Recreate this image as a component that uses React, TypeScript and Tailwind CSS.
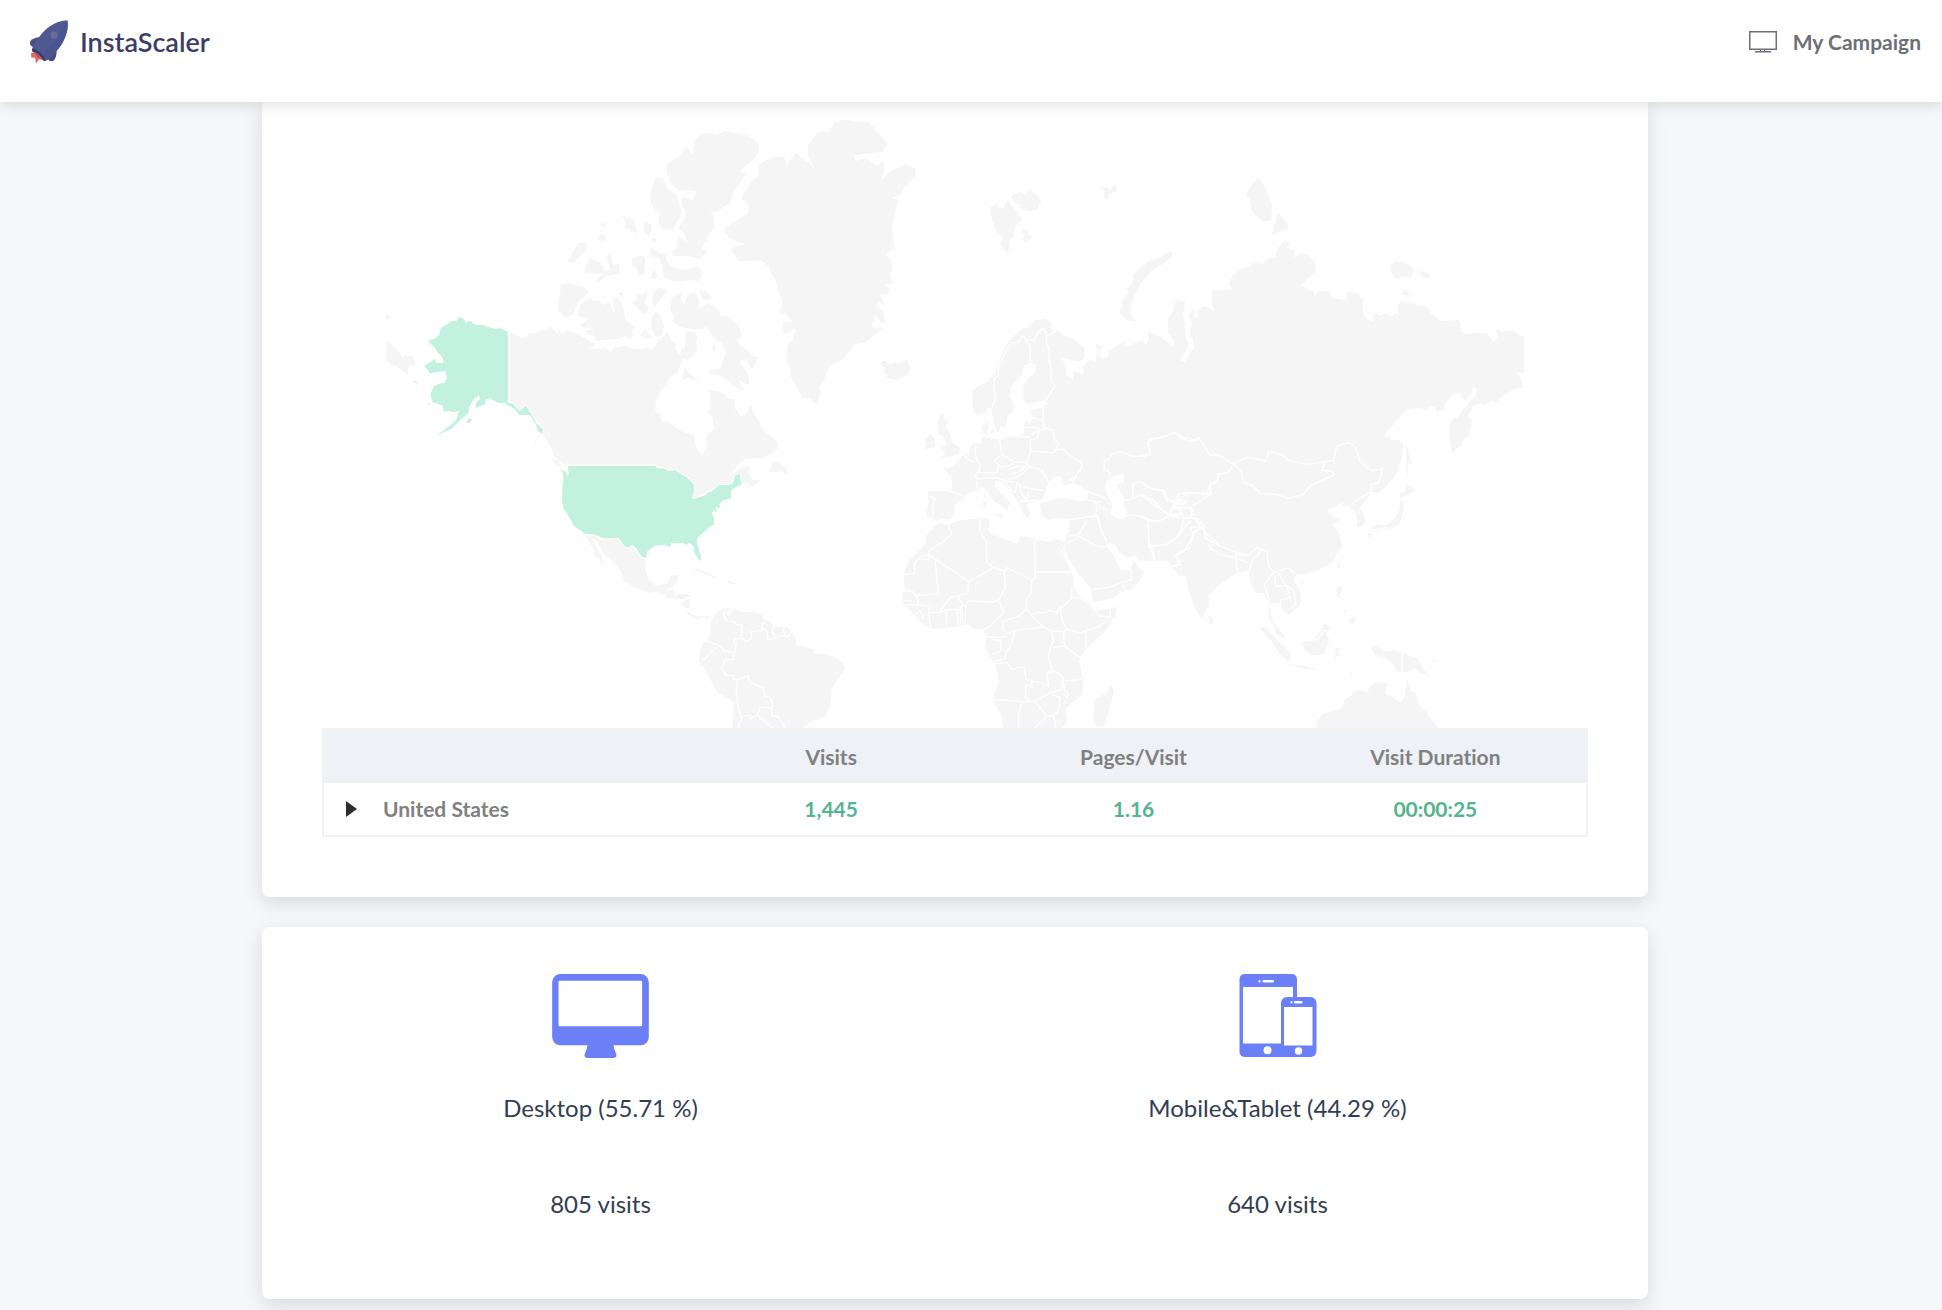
interface Region {
  name: string
  transform: string
  land: string
  water?: string
  borders?: string
}

const usa =
  'M82 75L345 75 350 80 375 84 385 90 405 88 438 107 460 128 462 150 455 168 460 174 497 162 500 155 516 150 535 133 560 133 578 127 585 102 600 98 600 118 607 128 580 142 572 152 573 172 548 178 538 190 540 200 532 200 527 196 530 215 521 206 515 218 522 232 521 250 505 260 487 277 472 290 470 305 482 345 482 360 475 355 462 335 460 315 448 306 437 312 427 305 392 307 393 317 383 317 375 311 345 314 322 330 318 352 305 347 285 318 275 312 265 320 255 318 235 291 215 292 190 292 160 280 135 279 125 270 103 257 85 225 70 203 66 185 66 145 70 110 64 85 75 92 83 104 86 98Z'

const alaska =
  'M268 647L278 652 288 666 295 661 306 662 308 668 325 673 334 671 357 679 379 685 390 681 413 692 413 906 385 906 358 892 346 897 345 909 316 922 318 904 330 893 325 883 312 893 295 920 297 933 265 962 243 985 228 990 197 1005 203 1000 222 988 240 973 258 957 266 930 245 934 238 929 220 932 217 914 200 907 188 905 180 880 192 855 206 849 223 845 230 830 226 812 236 810 205 812 180 817 162 794 195 773 197 785 221 785 214 765 200 752 195 740 174 722 180 716 193 714 207 702 211 682 222 675 246 660 258 661Z' +
  'M405 904L427 908 448 931 467 914 483 938 500 968 518 985 517 999 503 990 498 972 480 943 448 941 430 922 408 910Z' +
  'M288 966L296 952 306 955 298 965ZM126 841L138 841 148 850ZM170 906L180 908 176 913Z'

const regions: Region[] = [
  {
    name: 'canada',
    transform: 'translate(370 100) scale(0.33333)',
    land:
      'M418 694L437 699 460 714 478 697 493 697 508 686 522 688 529 690 541 674 550 688 562 698 568 684 573 701 592 688 622 700 648 714 668 725 674 734 657 742 680 745 705 740 720 753 734 738 757 736 765 733 790 745 825 742 840 738 843 754 848 737 858 735 862 718 878 707 893 693 903 718 917 730 915 742 926 760 940 735 942 770 937 775 928 800 922 812 905 825 888 850 872 870 858 895 855 932 870 938 877 965 895 963 925 985 948 996 970 1000 975 1030 987 1052 997 1062 1010 1040 1004 1010 1030 985 1028 955 1013 935 1022 915 1017 868 1040 870 1065 880 1075 893 1092 893 1095 925 1113 946 1130 935 1141 910 1152 940 1168 962 1170 975 1190 1000 1210 1012 1224 1030 1222 1045 1200 1060 1180 1072 1150 1072 1122 1075 1100 1095 1078 1125 1110 1105 1142 1092 1135 1115 1150 1138 1180 1135 1155 1150 1130 1164 1138 1150 1117 1145 1112 1118 1093 1120 1087 1140 1070 1148 1045 1150 1025 1167 1007 1170 1005 1178 972 1190 965 1185 973 1170 970 1145 950 1123 915 1105 880 1102 855 1090 590 1090 582 1092 550 1065 542 1040 530 1020 520 1000 520 985 500 960 483 935 467 912 448 930 427 905 418 903Z' +
      'M975 115L990 100 1030 95 1036 103 1064 90 1130 103 1155 118 1166 135 1165 155 1140 187 1122 196 1110 214 1130 215 1092 272 1079 308 1057 318 1048 330 1018 337 1034 345 1030 355 1035 378 1012 405 1008 422 996 435 996 446 1015 448 990 475 950 466 908 466 906 450 922 440 922 405 950 424 942 395 925 383 935 360 948 350 946 330 935 312 932 290 950 290 965 298 982 272 945 266 925 270 905 250 890 215 888 188 932 164 947 136 967 162Z' +
      'M857 231L878 231 890 262 921 284 928 315 935 337 922 360 908 387 880 385 865 370 866 348 873 333 857 332 842 305 840 280 850 248Z' +
      'M755 341L790 358 805 402 775 383 758 380 768 370ZM821 363L840 368 845 385 833 405 822 390ZM842 411L860 412 860 422 845 420ZM690 372L698 364 709 374 700 380ZM682 412L695 397 708 408 698 422 685 418ZM625 427L650 423 648 448 612 484 598 486 592 480Z' +
      'M658 470L685 482 708 510 722 508 708 468 715 458 722 468 730 495 747 488 747 518 710 525 685 543 675 540 698 516 640 518ZM784 475L808 462 825 470 823 520 805 525 798 498 784 495ZM850 503L862 520 858 535 840 532Z' +
      'M838 441L850 443 865 457 887 458 890 482 908 498 935 508 980 497 993 508 995 525 985 540 965 537 935 543 905 540 880 528 878 500 868 475 840 463Z' +
      'M573 552L600 546 615 553 638 555 655 576 622 605 610 640 587 650 562 628Z' +
      'M635 605L665 588 665 600 682 598 700 613 716 600 733 642 728 590 745 590 760 620 765 655 795 680 785 690 790 708 775 712 765 706 735 715 700 717 680 720 672 705 650 698 645 690 675 685 632 678 637 668 657 652 625 645 625 625Z' +
      'M742 577L757 573 758 592ZM785 603L803 595 797 572 810 582 820 582 828 570 830 590 822 605 835 615 832 635 820 642 808 628ZM850 575L862 560 892 565 875 592 850 620 846 595ZM855 632L870 640 882 675 878 700 860 710 845 685 842 655ZM820 685L845 705 838 715 812 705Z' +
      'M900 625L905 590 937 570 930 590 940 612 952 585 973 573 988 602 985 625 1015 607 1048 630 1053 648 1070 642 1078 655 1105 672 1116 705 1098 718 1115 738 1130 745 1143 765 1165 768 1148 805 1138 795 1130 775 1108 780 1135 825 1138 853 1105 838 1122 868 1100 862 1072 838 1045 822 1015 820 1018 805 1050 803 1055 790 1068 752 1055 725 1030 712 1020 690 1005 676 998 686 970 685 930 678 908 662 912 650Z' +
      'M988 570L1010 572 1030 595 1000 597ZM1025 742L1032 730 1040 742 1033 756ZM945 690L975 695 982 708 978 728 980 748 968 765 950 777 938 770 945 735ZM942 795L952 810 975 832 990 836 968 838 955 830 935 838Z' +
      'M48 717L92 760 92 772 103 764 128 766 137 785 130 794 115 794 113 822 90 806 80 795 60 790 58 780 48 785ZM48 640L65 650 48 657ZM491 1018L500 1020 498 1028Z',
  },
  {
    name: 'americas',
    transform: 'translate(540 440) scale(0.33333)',
    land:
      'M137 284L160 284 178 296 215 296 232 292 252 318 265 324 278 315 303 350 317 354 315 385 325 415 348 434 382 428 390 405 417 402 408 425 400 438 385 440 385 445 375 455 368 462 347 452 328 455 290 442 268 430 247 418 247 400 225 370 190 335 172 305 155 290 160 305 173 325 183 342 190 365 204 383 190 372 175 350 160 340 165 330 150 310Z' +
      'M372 462L382 450 397 443 405 455 400 470 380 472ZM402 468L415 460 440 459 452 466 425 475 405 474ZM420 488L450 470 448 502 435 500ZM432 508L455 518 475 528 495 522 508 528 507 535 495 527 480 532 470 533 450 525Z' +
      'M447 388L475 385 510 398 535 412 520 412 500 400 480 393ZM560 417L570 420 590 428 566 430ZM505 432L515 433 510 435Z' +
      'M712 38L700 62 718 65 735 78 741 90 738 104 728 92 688 92 695 72ZM28 52L50 58 68 78 55 74Z' +
      'M530 512L550 503 565 497 575 510 585 502 600 512 640 512 665 520 670 535 690 540 700 555 745 560 768 595 765 610 785 615 820 625 822 637 860 640 885 650 908 662 913 685 900 705 875 740 872 780 865 810 850 830 815 840 795 855 785 866 577 866 582 790 575 780 530 752 505 705 487 675 478 665 477 650 482 625 490 605 503 595 513 580 512 545Z',
    water: 'M560 510L570 505 573 520 563 525Z',
    borders:
      'M556 503L550 522 560 541 582 542 587 550 605 552 603 592 583 594 582 605 588 606 580 655 555 655 545 682 557 703 577 703 577 713 592 718 588 750 592 782 597 810 605 835 597 845 597 866M497 600L535 612 552 630 577 633M483 650L493 655 510 635 530 618' +
      'M577 715L597 715 625 703 625 720 670 742 673 765 690 768 698 795 692 800 660 800 652 822 632 832 628 824 612 824 603 835M592 782L585 785M692 800L697 825 717 828 720 840 730 845 733 866M652 822L697 862' +
      'M603 592L622 600 635 590 632 572 665 568 665 550 678 540M665 560L680 570 683 597 700 592 718 585 745 587 755 572M705 553L695 568 700 585M733 558L730 570 735 585',
  },
  {
    name: 'greenland',
    transform: 'translate(680 100) scale(0.33333)',
    land:
      'M461 64L490 56 568 65 624 128 608 153 521 163 526 180 560 172 590 195 608 180 613 200 603 238 635 208 676 188 703 200 706 223 668 265 663 280 634 291 654 297 636 370 637 418 647 443 630 446 617 461 636 485 636 513 628 517 638 546 618 550 629 570 620 580 600 580 612 613 595 604 587 614 608 630 617 662 605 667 583 642 582 660 572 679 608 682 560 722 520 732 505 752 485 778 447 796 437 812 436 838 417 857 420 874 411 909 402 907 388 892 366 890 352 862 332 828 331 802 320 782 317 755 324 730 338 718 344 690 344 682 320 698 309 693 309 664 320 662 340 666 313 637 299 636 309 605 295 570 284 533 271 517 270 502 243 478 175 480 151 446 170 434 192 431 190 426 152 413 132 395 132 383 203 335 208 315 183 293 192 272 220 235 237 225 234 194 255 178 280 168 311 167 321 191 347 153 368 175 385 184 403 204 384 165 383 135 415 91 448 93Z' +
      'M600 790L605 780 618 780 628 793 645 783 658 787 683 774 685 790 693 806 680 822 650 837 615 830 622 820 605 815 617 802Z',
  },
  {
    name: 'russia',
    transform: 'translate(960 100) scale(0.3699 0.33333)',
    land:
      'M79 321L100 305 104 321 119 321 124 299 133 302 168 353 150 373 143 407 134 418 131 453 125 452 108 429 115 412 100 393 86 358ZM138 286L163 271 176 284 186 267 205 279 219 298 208 326 186 330 162 322 160 308 146 306ZM168 388L180 383 184 398 195 408 180 424 168 415 173 403Z' +
      'M377 266L398 258 402 273 416 252 426 262 420 271 405 280 397 297 387 287 391 268ZM772 283L792 243 809 232 824 260 843 312 841 357 825 362 802 348 789 330 782 293ZM842 401L856 345 862 337 887 369 886 384Z' +
      'M573 452L574 466 560 480 515 512 488 546 460 612 461 640 478 663 450 659 444 647 430 638 432 622 439 618 439 600 455 572 449 567 468 537 468 520 510 480 540 470 555 457Z' +
      'M1163 510L1166 490 1178 482 1198 483 1227 502 1221 527 1195 527 1178 535ZM1242 508L1272 521 1268 532 1256 530 1244 518ZM1189 580L1203 566 1215 578 1213 585ZM1525 648L1520 655 1525 658Z' +
      'M235 708L265 690 277 703 297 709 335 740 338 765 330 776 318 782 270 767 285 790 285 820 305 835 306 808 330 820 335 812 331 797 350 777 357 777 366 787 368 765 374 752 365 728 384 735 376 750 377 765 384 771 400 765 402 748 450 717 443 735 460 736 468 727 480 727 492 717 502 733 511 712 506 692 530 700 548 712 576 738 580 720 562 695 562 655 577 625 583 595 608 603 602 640 608 665 610 710 616 728 610 752 595 777 607 783 622 755 632 742 628 712 620 705 626 665 617 640 630 625 632 603 633 645 641 652 643 625 660 617 672 620 687 633 680 600 680 573 690 567 718 568 734 564 727 545 735 525 762 502 785 497 789 487 805 483 815 492 835 471 852 470 855 450 864 432 880 418 892 430 882 440 903 448 904 471 915 459 938 460 960 483 962 510 921 554 950 570 955 567 959 587 966 571 985 570 1002 575 1006 591 1044 597 1046 572 1075 578 1088 597 1089 625 1087 630 1098 650 1114 665 1121 635 1136 645 1150 638 1164 646 1175 638 1188 642 1182 612 1192 600 1265 620 1275 640 1300 661 1345 657 1353 665 1354 690 1368 700 1395 695 1425 698 1440 721 1453 710 1447 685 1462 689 1495 690 1524 709 1524 812 1516 817 1504 814 1516 835 1522 862 1508 860 1473 880 1446 908 1441 898 1412 913 1408 906 1388 913 1373 945 1383 958 1382 980 1374 1005 1362 1010 1355 1035 1343 1040 1332 1057 1328 1050 1321 990 1325 967 1333 952 1345 948 1378 900 1392 885 1398 860 1386 860 1381 878 1363 898 1353 877 1332 880 1308 915 1310 927 1287 932 1284 920 1272 916 1263 924 1232 921 1205 928 1143 1007 1158 1008 1165 1020 1180 1016 1193 1030 1196 1045 1190 1090 245 1085 230 985 222 945 228 915 238 908 232 900 258 857 247 840 241 808 246 785 236 763 244 745 232 727Z',
  },
  {
    name: 'europe',
    transform: 'translate(880 300) scale(0.33333)',
    land:
      'M460 58L495 52 518 70 510 80 520 92 505 105 503 135 512 150 506 178 515 200 512 235 525 255 495 298 440 310 428 290 430 250 468 208 465 190 450 185 430 195 427 220 392 258 388 285 402 312 395 335 383 342 378 375 360 378 355 392 348 390 332 325 325 320 315 335 295 343 280 335 276 268 290 258 325 240 345 215 365 160 385 120 420 88 445 78Z' +
      'M305 378L322 360 325 375 320 398 308 395ZM330 388L343 385 345 395 332 400Z' +
      'M178 342L192 340 190 358 205 360 195 378 210 398 218 425 240 440 235 462 180 472 195 458 183 440 200 430 190 405 175 400 172 365ZM150 400L165 412 165 435 135 448 140 425 135 415Z' +
      'M312 405L330 415 345 412 358 418 380 408 400 405 430 410 450 412 452 405 418 405 430 398 430 378 430 365 440 358 450 367 458 352 468 350 452 342 450 328 475 322 495 320 540 315 1020 315 1020 720 565 720 568 655 530 650 510 657 485 645 480 620 478 605 495 595 490 598 470 597 465 603 443 605 440 615 452 635 443 650 430 640 420 610 410 600 400 580 375 555 368 542 345 540 343 555 365 580 392 608 385 612 380 628 368 618 340 600 320 570 305 558 285 570 250 585 252 590 225 610 222 635 210 655 180 655 170 662 155 648 137 645 145 605 142 572 160 570 210 572 217 560 213 525 185 500 210 500 235 480 245 465 265 460 275 430 290 425 300 430 305 410Z' +
      'M345 640L370 640 368 652 350 645ZM308 600L318 600 316 620 308 618ZM310 578L315 578 315 592 310 590Z',
    water:
      'M497 565L505 545 520 528 540 525 550 540 545 548 560 552 580 545 565 535 580 528 592 515 590 530 575 545 600 555 622 570 625 585 618 598 590 600 560 590 530 592 505 602 478 606 492 585Z' +
      'M672 560L680 540 700 525 730 520 732 545 710 550 722 575 735 595 730 610 740 630 738 650 715 655 690 640 698 610 680 580Z',
    borders:
      'M332 328L345 295 340 240 347 228 355 225 355 200 370 165 382 140 395 125 415 125 427 103 440 117 462 117 475 92 490 82 498 95 500 128 508 150 505 178 512 200 512 235 525 255 495 298M427 103L450 135 450 185M498 105L518 95' +
      'M690 525L685 512 672 505 672 478 680 478 700 457 722 452 755 465 795 467 808 455 802 425 810 415 850 408 885 395 910 410 928 412 945 420 955 410 990 462 1005 460 1020 463' +
      'M758 590L758 548 782 542 818 565 850 567 862 592 885 605 895 578 940 575 980 580 990 550 1010 545 1018 515M735 598L750 595 785 580 825 602 850 632 880 645 905 640 900 620 880 615 920 600M870 640L880 610 900 600 880 600M920 620L940 625 930 650 960 655' +
      'M735 645L755 640 805 655 830 662 865 645 900 650M452 450L520 455 530 445 550 445 565 460 605 485 603 505 590 518M455 400L478 388 495 382 520 388 520 410 535 430 525 450M430 380L465 378 478 388 470 412 450 417 452 450 440 485 440 495 480 505 505 540' +
      'M358 415L365 460 400 482 440 485M285 430L285 450 290 480 300 490 297 510 285 525 290 535 325 530 350 530M365 460L342 478 360 498 385 495 400 485M290 515L325 515 350 515 355 500M385 505L415 495 435 500 410 515 385 520M385 535L405 530 430 515 445 500' +
      'M350 530L375 540 410 545 430 560 490 568M375 545L390 565 405 575 410 548M415 545L425 580 440 600 445 570M420 600L445 600 470 597M250 462L265 475 285 485M210 572L250 583M147 585L165 592 158 620 160 648M290 540L292 565' +
      'M430 378L432 365M455 350L488 358 495 382M490 320L488 355M485 505L500 530M610 568L660 585 680 595M620 598L645 600 650 625 645 645 568 657M640 600L665 620 685 628M645 605L665 600M655 645L660 680 680 720',
  },
  {
    name: 'africa',
    transform: 'translate(880 500) scale(0.33333)',
    land:
      'M172 66L205 72 240 58 300 52 325 52 328 75 322 85 335 100 370 112 410 128 420 105 460 112 490 120 505 122 530 115 555 125 548 140 552 158 532 130 570 205 580 230 582 260 600 285 632 310 640 330 690 322 710 318 705 345 670 395 620 440 605 460 597 480 602 500 608 540 608 580 575 605 555 625 562 662 535 690 370 690 362 640 340 600 340 585 358 540 345 490 312 440 320 410 305 385 280 385 265 370 240 375 195 380 152 385 125 365 100 340 70 310 64 290 74 265 70 220 85 180 115 150 135 130 140 100Z' +
      'M568 50L568 90 560 100 555 120 552 145 575 190 600 225 632 262 638 305 700 290 735 268 755 265 775 245 792 212 775 200 762 178 750 205 722 206 712 188 697 158 675 132 690 125 705 132 718 155 745 170 765 162 775 180 860 178 880 200 895 225 915 222 925 265 945 320 962 348 975 335 985 280 1020 250 1020 40Z' +
      'M695 550L701 572 695 600 672 672 650 678 638 655 645 595 680 575ZM988 345L1000 360 995 370 988 365Z',
    water: 'M712 188L722 202 748 202 760 178 742 190 725 188Z',
    borders:
      'M205 72L215 100 185 125 147 147 145 160 265 242 340 200 372 210 380 200 455 237 465 232 463 112M465 213L577 213M147 145L145 175 115 175 103 190 103 218 70 220M145 160L125 165 105 182M165 182L175 278 112 283M72 270L95 270 112 290 115 312' +
      'M265 242L263 275 235 285 210 290 180 330M300 52L298 90 318 120 320 185 340 200M372 210L375 260 357 295 340 303 265 300 258 310 255 360M357 300L370 335 345 360 330 375 310 385M367 362L367 380 380 395M455 237L452 278 440 290 438 325 415 345 368 362' +
      'M455 340L475 335 495 335 510 328 530 335 540 315 545 355 560 385M440 325L460 350 490 378 515 390 550 392M380 400L405 388 430 385 490 378M403 388L395 430 380 450 372 475 345 480M345 487L380 485 395 505 415 500 433 500 437 535 480 545 505 555 500 515 520 510' +
      'M515 395L520 420 510 440 505 470 515 505 540 520 550 535 552 565 565 580 560 590 548 575M555 540L605 535M560 385L550 395 553 435 520 440M553 435L600 470M560 385L600 395 630 385 660 375 690 350 660 345 640 325M615 390L617 440M690 322L690 350' +
      'M340 597L370 597 420 602 465 600 510 575 545 565 545 525M455 535L455 555 437 550 435 590 450 600M425 605L415 640 415 690M467 605L500 645 520 645 530 690M515 580L540 590 535 630 520 645M500 645L460 685' +
      'M197 378L200 325 228 325M235 375L230 325M242 370L240 318 260 312M250 370L245 325M75 312L110 312 150 315 145 335 152 385M105 340L120 330 130 355M150 335L178 335 200 325M318 408L360 410 378 405M335 415L362 418 362 450 335 460M575 262L575 290 600 290 640 320M545 320L575 290M230 285L248 310' +
      'M70 298L95 300M568 105L595 100 620 60M560 125L585 115 595 105 650 135 680 138M650 40L660 80 680 125M635 265L690 258 725 245 755 235 752 205 722 206M725 245L735 268M805 65L805 120 820 150 820 178M810 135L855 132 890 110 910 85 930 60M880 195L900 190 885 165 930 140 940 95 970 75M940 50L980 100 1020 135M985 130L990 145 1020 158M568 55L650 45',
  },
  {
    name: 'asia',
    transform: 'translate(1140 420) scale(0.33333)',
    land:
      'M0 0L765 0 728 45 745 50 760 62 775 55 788 68 785 110 770 155 735 200 715 215 693 212 680 235 657 260 670 275 675 300 668 312 650 318 650 285 640 270 625 255 605 255 610 242 580 262 560 265 580 290 603 290 578 312 600 345 605 375 575 425 540 445 495 460 470 458 460 475 482 520 482 550 445 582 422 560 415 545 395 545 387 560 400 605 430 640 435 655 405 635 400 610 385 590 385 545 370 515 345 515 328 475 325 450 290 455 245 485 205 520 205 555 182 590 160 555 140 465 115 462 80 418 0 418Z' +
      'M780 240L790 240 790 270 778 310 745 325 735 318 700 325 692 322 710 310 740 312 765 290 778 268ZM798 190L828 208 805 222 778 230 780 215 795 210ZM798 65L805 90 815 128 803 128 803 165 798 150ZM682 338L698 335 690 355ZM705 328L725 326 715 332Z' +
      'M602 422L597 448 590 435ZM482 482L498 477 490 489ZM595 495L607 500 600 525 613 540 588 522ZM625 598L645 585 642 610 632 608ZM610 565L622 570 617 578ZM208 582L219 598 216 609 207 606Z' +
      'M355 620L375 620 430 675 452 700 450 723 420 700 390 655ZM452 730L490 735 540 748 480 742ZM485 662L525 650 555 608 572 620 558 640 568 658 550 700 520 703 495 692ZM585 680L608 680 592 690 608 710 592 700 585 720ZM625 765L643 755 632 757Z' +
      'M690 680L710 676 722 686 740 692 760 687 830 712 845 735 865 766 840 755 820 742 805 752 785 755 765 750 765 735 735 710 705 700ZM870 725L890 713 885 723Z' +
      'M527 910L545 880 605 860 612 837 630 825 650 805 680 815 690 795 712 782 745 788 733 815 780 843 792 830 800 775 815 812 825 812 835 850 865 880 900 930 535 930Z',
    borders:
      'M280 128L320 108 378 120 385 90 420 100 450 120 500 130 555 122 545 148 570 150 585 160 545 178 510 195 490 220 445 232 410 220 360 217 335 192 310 185 305 155Z' +
      'M550 122L580 118 590 75 625 65 645 78 660 122 695 150 728 142 715 185 693 190 693 212 660 232 628 255M640 278L662 275M0 105L30 100 25 60 105 35 120 50 150 62 175 50 210 102 240 105 280 128 265 155 235 160 230 180 208 190 212 218 180 240 150 260 95 262' +
      'M105 240L150 215 210 218M0 180L25 200 65 207 80 240 105 245 120 235 140 242 125 252 105 248M0 220L40 250 90 285 120 275 130 290M95 260L90 285M0 282L25 300 60 298 90 285M25 300L25 375 80 372 110 350 125 320 130 290 165 292 190 312 195 350 230 372 290 395 325 403 350 380 380 390 385 435 400 455 445 440 465 460' +
      'M25 375L45 415M95 435L120 430 110 400 135 385 160 340 150 318 185 318M207 378L220 370M207 378L245 402 285 410M285 390L290 450M290 412L320 425M290 402L318 402M325 455L340 410 355 400 362 380M400 455L372 490 385 530 388 560M415 455L430 485 460 510 468 550 445 565M405 465L405 495 440 495 450 530 420 538 422 560M148 260L160 285' +
      'M485 660L535 655 548 630 572 628M786 690L786 760',
  },
]

const rows = [{ country: 'United States', visits: '1,445', pages: '1.16', duration: '00:00:25' }]

function WorldMap() {
  return (
    <svg
      viewBox="385 101 1139 626"
      role="img"
      aria-label="Visits by country"
      className="mx-auto block h-[626px] w-[90%] fill-[#f5f5f5]"
    >
      {regions.map(r => (
        <path key={r.name} d={r.land} transform={r.transform} />
      ))}
      {regions.map(r => (
        <g key={r.name} transform={r.transform}>
          {r.water && <path d={r.water} className="fill-white" />}
          {r.borders && (
            <path d={r.borders} className="fill-none stroke-white stroke-[4]" strokeLinejoin="round" />
          )}
        </g>
      ))}
      <path d={alaska} transform="translate(370 100) scale(0.33333)" className="fill-[#c2f1e0]" />
      <path d={usa} transform="translate(540 440) scale(0.33333)" className="fill-[#c2f1e0]" />
      <circle cx="462" cy="579" r="1" />
    </svg>
  )
}

function RocketLogo() {
  return (
    <svg viewBox="90 60 115 132" className="h-11 w-[38px]" aria-hidden="true">
      <path d="M93 160L108 156 128 172 126 180 117 178 108 192 106 174 94 173Z" fill="#e0685f" />
      <path d="M121 112Q99 113 91 124Q87 136 97 140L112 142Z" fill="#4a4f87" />
      <path d="M170 150Q172 168 163 181Q155 187 147 181L138 168Z" fill="#474c85" />
      <path d="M203 60Q209 96 184 136Q166 162 145 178L134 184Q127 164 97 152L98 141Q112 114 139 87Q168 62 203 60Z" fill="#515991" />
      <path d="M203 60Q209 96 184 136Q166 162 145 178L134 184Q129 172 122 166Q172 122 203 60Z" fill="#4b5590" />
      <path d="M97 145Q127 155 136 182L130 183Q118 163 96 154Z" fill="#35386b" />
      <path d="M102 156Q118 160 128 178L113 174Z" fill="#b85a64" />
      <circle cx="163" cy="105" r="11" fill="#666ca0" />
    </svg>
  )
}

function MonitorIcon() {
  return (
    <svg viewBox="0 0 28 22" className="h-[22px] w-7 fill-none stroke-[#6c7075]" aria-hidden="true">
      <rect x="0.75" y="0.75" width="26.5" height="17.5" strokeWidth="1.5" />
      <path d="M11.5 18.5V21M15.5 18.5V21M6 20.75H22" strokeWidth="1.3" />
    </svg>
  )
}

function DesktopIcon() {
  return (
    <svg viewBox="213 98 290 252" className="h-[84px] w-[97px]" aria-hidden="true">
      <path
        fillRule="evenodd"
        fill="#6b80f7"
        d="M238 98H478A25 25 0 0 1 503 123V287A25 25 0 0 1 478 312H397Q398 324 405 337Q408 350 397 350H319Q307 350 311 337Q318 324 319 312H238A25 25 0 0 1 213 287V123A25 25 0 0 1 238 98ZM236 118Q232 118 232 122V251Q232 255 236 255H479Q483 255 483 251V122Q483 118 479 118Z"
      />
    </svg>
  )
}

function MobileIcon() {
  return (
    <svg viewBox="0 0 78 84" className="h-[84px] w-[78px] fill-white" aria-hidden="true">
      <rect x="0.5" width="57.5" height="83" rx="5" fill="#6b80f7" />
      <rect x="4" y="13" width="50" height="56.5" />
      <rect x="19.5" y="6" width="2" height="2.5" rx="1" />
      <rect x="23.5" y="6" width="11.5" height="2.5" rx="1" />
      <circle cx="28.5" cy="76.3" r="4" />
      <rect x="42" y="23" width="35.5" height="60" rx="6" fill="#6b80f7" />
      <rect x="45" y="33" width="28.5" height="38.5" />
      <rect x="51.5" y="27" width="2" height="2.5" rx="1" />
      <rect x="55" y="27" width="8.5" height="2.5" rx="1" />
      <circle cx="59.5" cy="77" r="3.7" />
    </svg>
  )
}

export default function App() {
  return (
    <div className="min-h-screen bg-[#f5f7fb] font-['Lato',sans-serif] [font-variant-ligatures:none]">
      <header className="sticky top-0 z-10 flex h-[102px] items-start justify-between bg-white pt-5 pr-[21px] pl-[30px] shadow-[0_2px_14px_rgba(0,0,0,0.14)]">
        <a href="#" className="flex h-11 items-center gap-3">
          <RocketLogo />
          <span className="text-[27px] leading-8 font-semibold text-[#3d3c6b]">InstaScaler</span>
        </a>
        <a href="#" className="flex h-11 items-center gap-4 text-[21px] font-bold text-[#6c7075]">
          <MonitorIcon />
          My Campaign
        </a>
      </header>

      <main className="pr-8 pb-3">
        <div className="mx-auto flex max-w-[1386px] flex-col gap-[30px]">
          <section className="rounded-b-lg bg-white px-[60px] pb-[60px] shadow-[0_6px_20px_rgba(0,0,0,0.12)]">
            <WorldMap />
            <table className="w-full table-fixed border-collapse border-2 border-[#eef1f6] text-center text-[21px] font-bold text-[#808080]">
              <thead className="bg-[#eef1f6]">
                <tr className="h-[54px]">
                  <th className="w-[357px]" aria-label="Country" />
                  <th>Visits</th>
                  <th>Pages/Visit</th>
                  <th>Visit Duration</th>
                </tr>
              </thead>
              <tbody>
                {rows.map(row => (
                  <tr key={row.country} className="h-[53px] text-[#53b48d]">
                    <td>
                      <div className="flex items-center gap-[26px] pl-[22px] text-[#808080]">
                        <button aria-label={`Expand ${row.country}`}>
                          <svg viewBox="0 0 11 16" className="h-4 w-[11px] fill-[#2e2e2e]">
                            <path d="M0 0L11 8 0 16Z" />
                          </svg>
                        </button>
                        {row.country}
                      </div>
                    </td>
                    <td>{row.visits}</td>
                    <td>{row.pages}</td>
                    <td>{row.duration}</td>
                  </tr>
                ))}
              </tbody>
            </table>
          </section>

          <section className="grid grid-cols-2 rounded-lg bg-white pt-[47px] pr-8 pb-[77px] text-center text-2xl text-[#323d52] shadow-[0_6px_20px_rgba(0,0,0,0.12)]">
            <div className="flex flex-col items-center">
              <DesktopIcon />
              <p className="mt-8 leading-9">Desktop (55.71 %)</p>
              <p className="mt-[60px] leading-9">805 visits</p>
            </div>
            <div className="flex flex-col items-center">
              <MobileIcon />
              <p className="mt-8 leading-9">Mobile&amp;Tablet (44.29 %)</p>
              <p className="mt-[60px] leading-9">640 visits</p>
            </div>
          </section>
        </div>
      </main>
    </div>
  )
}
